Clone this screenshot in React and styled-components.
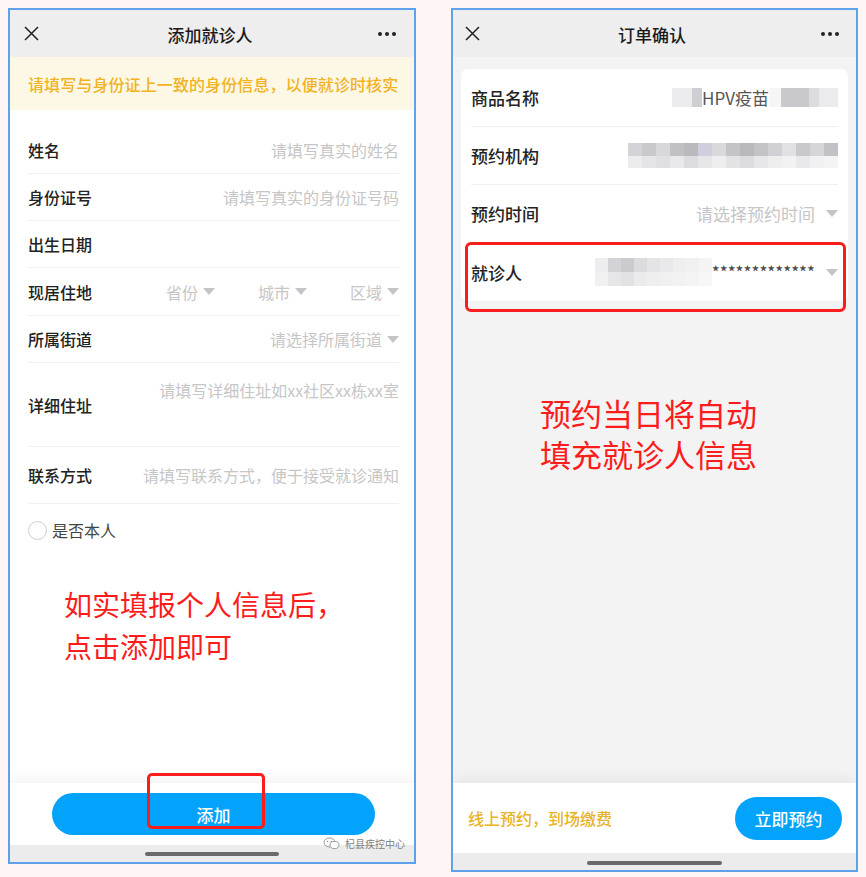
import React from "react";
import styled, { createGlobalStyle } from "styled-components";

const Global = createGlobalStyle`
  html, body { margin: 0; padding: 0; background: #fdf6f5; }
  body { font-family: "Noto Sans CJK SC", "Noto Sans", sans-serif; }
  * { box-sizing: border-box; }
`;

const Page = styled.div`
  display: flex;
  align-items: flex-start;
  gap: 35px;
  padding: 8px 0 0 8px;
  width: 866px;
  height: 877px;
  overflow: hidden;
`;

const Phone = styled.div`
  width: ${(p) => p.$w}px;
  height: ${(p) => p.$h}px;
  border: 2px solid #5ea2ec;
  display: flex;
  flex-direction: column;
  background: ${(p) => p.$bg};
  overflow: hidden;
`;

const NavBar = styled.div`
  height: 47px;
  flex: none;
  background: #eeeeee;
  display: grid;
  grid-template-columns: 40px 1fr 40px;
  align-items: center;
  padding: 0 ${(p) => p.$pr}px 0 ${(p) => p.$pl}px;
`;

const NavTitle = styled.div`
  text-align: center;
  font-size: 17px;
  font-weight: 500;
  color: #1a1a1a;
  line-height: 24px;
  padding-top: 2px;
`;

const DotsWrap = styled.div`
  display: flex;
  justify-content: flex-end;
  gap: 3px;
  padding-top: 1px;
`;

const Dot = styled.span`
  width: 4px;
  height: 4px;
  border-radius: 50%;
  background: #222;
`;

const CloseIcon = () => (
  <svg width="15" height="15" viewBox="0 0 15 15">
    <path d="M1 1 L14 14 M14 1 L1 14" stroke="#222" strokeWidth="1.5" fill="none" />
  </svg>
);

const Dots = () => (
  <DotsWrap>
    <Dot />
    <Dot />
    <Dot />
  </DotsWrap>
);

const Banner = styled.div`
  height: 53px;
  flex: none;
  background: #fdf8e5;
  color: #f1b224;
  font-size: 16px;
  font-weight: 500;
  display: flex;
  align-items: center;
  padding: 0 0 0 18px;
  white-space: nowrap;
  letter-spacing: 0.1px;
`;

const FormBody = styled.div`
  flex: 1;
  padding: 17px 15px 0 18px;
`;

const Row = styled.div`
  height: ${(p) => p.$h || 47}px;
  border-bottom: 1px solid #f1f1f1;
  display: flex;
  align-items: center;
  justify-content: space-between;
`;

const Label = styled.div`
  font-size: ${(p) => p.$fs || 16}px;
  font-weight: 500;
  color: #222;
  white-space: nowrap;
`;

const Placeholder = styled.div`
  font-size: ${(p) => p.$fs || 16}px;
  color: #c6c6c6;
  white-space: nowrap;
  display: flex;
  align-items: center;
  gap: ${(p) => p.$gap || 5}px;
  align-self: ${(p) => (p.$top ? "flex-start" : "center")};
  padding-top: ${(p) => (p.$top ? 15 : 0)}px;
`;

const Tri = styled.span`
  width: 0;
  height: 0;
  border-left: 6px solid transparent;
  border-right: 6px solid transparent;
  border-top: 7px solid #c3c3c8;
  flex: none;
  margin-left: ${(p) => p.$ml || 0}px;
`;

const RegionGrid = styled.div`
  display: grid;
  grid-template-columns: repeat(3, 92px);
  justify-items: end;
`;

const CheckRow = styled.div`
  height: 52px;
  display: flex;
  align-items: center;
  gap: 5px;
  font-size: 16px;
  color: #444;
`;

const Circle = styled.span`
  width: 19px;
  height: 19px;
  border-radius: 50%;
  border: 1px solid #cfcfcf;
  background: #fff;
`;

const Note = styled.div`
  color: #fb1c1c;
  font-size: ${(p) => p.$fs}px;
  line-height: ${(p) => p.$lh}px;
  margin: ${(p) => p.$mt}px 0 0 ${(p) => p.$ml}px;
  white-space: nowrap;
`;

const BottomBar = styled.div`
  position: relative;
  height: ${(p) => p.$h}px;
  flex: none;
  background: #fff;
  box-shadow: 0 -5px 12px rgba(0, 0, 0, 0.05);
  display: flex;
  align-items: center;
  justify-content: ${(p) => p.$justify};
  padding: 0 ${(p) => p.$pr}px 0 ${(p) => p.$pl}px;
`;

const BlueButton = styled.button`
  border: none;
  background: #03a3fb;
  color: #fff;
  font-family: inherit;
  font-size: 17px;
  font-weight: 500;
  width: ${(p) => p.$w}px;
  height: ${(p) => p.$h}px;
  border-radius: 22px;
  padding: 0;
`;

const HomeArea = styled.div`
  position: relative;
  height: 17px;
  flex: none;
  background: #ececec;
  display: flex;
  justify-content: center;
  align-items: flex-start;
  padding-top: ${(p) => p.$pt}px;
`;

const HomeIndicator = styled.span`
  width: ${(p) => p.$w}px;
  height: 4px;
  border-radius: 2px;
  background: #6a6a6a;
`;

const RedBox = styled.div`
  position: absolute;
  left: ${(p) => p.$l}px;
  top: ${(p) => p.$t}px;
  width: ${(p) => p.$w}px;
  height: ${(p) => p.$h}px;
  border: 3px solid #fb1c1c;
  border-radius: ${(p) => p.$r}px;
  pointer-events: none;
`;

const Watermark = styled.div`
  position: absolute;
  left: 313px;
  top: -9px;
  display: flex;
  align-items: center;
  gap: 5px;
  font-size: 10px;
  color: #7d7d7d;
  white-space: nowrap;
`;

const WeChat = () => (
  <svg width="17" height="13" viewBox="0 0 17 13">
    <ellipse cx="6.5" cy="5.5" rx="5.5" ry="4.5" fill="none" stroke="#9a9a9a" strokeWidth="1" />
    <ellipse cx="11.5" cy="8" rx="4.5" ry="3.6" fill="#fff" stroke="#9a9a9a" strokeWidth="1" />
    <circle cx="4.5" cy="4.5" r="0.8" fill="#9a9a9a" />
    <circle cx="8.2" cy="4.5" r="0.8" fill="#9a9a9a" />
  </svg>
);

/* right panel */

const GrayBody = styled.div`
  flex: 1;
  background: #f3f3f3;
  padding: 12px 8px 0 8px;
`;

const Card = styled.div`
  background: #fff;
  border-radius: 7px;
  padding: 0 10px;
`;

const CardRow = styled.div`
  position: relative;
  height: 58px;
  display: flex;
  align-items: center;
  justify-content: space-between;
  border-bottom: ${(p) => (p.$last ? "none" : "1px solid #f0f0f0")};
`;

const Masked = styled.div`
  display: flex;
  align-items: center;
`;

const Cell = styled.span`
  display: block;
  width: ${(p) => p.$w}px;
  height: ${(p) => p.$h || 19}px;
  background: ${(p) => p.$c};
  flex: none;
`;

const MosaicGrid = styled.div`
  display: grid;
  grid-template-columns: repeat(${(p) => p.$cols}, ${(p) => p.$cw}px);
  grid-template-rows: ${(p) => p.$rows};
  filter: blur(0.6px);
`;

const ValueText = styled.span`
  font-size: 17px;
  color: ${(p) => p.$c || "#555"};
  white-space: nowrap;
  line-height: 20px;
`;

const HintText = styled.div`
  color: #e9b325;
  font-size: 16px;
  font-weight: 500;
`;

const orgTop = ["#d4d4d8", "#c9c9cd", "#d8d8db", "#c0c0c5", "#b9b9be", "#cecede", "#d9d9dc", "#c4c4c8", "#b8b8bd", "#c3c3c7", "#d1d1d5", "#e1e1e3", "#c9c9cd", "#d6d6d9", "#c1c1c6"];
const orgBot = ["#ececee", "#e5e5e7", "#e0e0e3", "#e9e9eb", "#dddde0", "#e6e6e8", "#eeeeef", "#e3e3e5", "#dcdcdf", "#e7e7e9", "#eeeeef", "#f2f2f3", "#e9e9eb", "#f1f1f2", "#f4f4f5"];
const patTop = ["#ededef", "#d3d3d7", "#cbcbcf", "#dcdcdf", "#e4e4e6", "#e9e9eb", "#eeeeef", "#f0f0f1", "#f4f4f5"];
const patBot = ["#f1f1f2", "#e6e6e8", "#e2e2e4", "#ebebed", "#eeeeef", "#f0f0f1", "#f2f2f3", "#f4f4f5", "#f7f7f7"];

export default function App() {
  return (
    <>
      <Global />
      <Page>
        <Phone $w={408} $h={856} $bg="#fff">
          <NavBar $pl={14} $pr={18}>
            <CloseIcon />
            <NavTitle>添加就诊人</NavTitle>
            <Dots />
          </NavBar>
          <Banner>请填写与身份证上一致的身份信息，以便就诊时核实</Banner>
          <FormBody>
            <Row>
              <Label>姓名</Label>
              <Placeholder>请填写真实的姓名</Placeholder>
            </Row>
            <Row>
              <Label>身份证号</Label>
              <Placeholder>请填写真实的身份证号码</Placeholder>
            </Row>
            <Row>
              <Label>出生日期</Label>
            </Row>
            <Row $h={48}>
              <Label>现居住地</Label>
              <RegionGrid>
                <Placeholder>
                  省份<Tri />
                </Placeholder>
                <Placeholder>
                  城市<Tri />
                </Placeholder>
                <Placeholder>
                  区域<Tri />
                </Placeholder>
              </RegionGrid>
            </Row>
            <Row>
              <Label>所属街道</Label>
              <Placeholder>
                请选择所属街道<Tri />
              </Placeholder>
            </Row>
            <Row $h={84}>
              <Label>详细住址</Label>
              <Placeholder $top>请填写详细住址如xx社区xx栋xx室</Placeholder>
            </Row>
            <Row $h={57}>
              <Label>联系方式</Label>
              <Placeholder>请填写联系方式，便于接受就诊通知</Placeholder>
            </Row>
            <CheckRow>
              <Circle />
              是否本人
            </CheckRow>
            <Note $fs={28} $lh={42} $mt={27} $ml={36}>
              如实填报个人信息后，
              <br />
              点击添加即可
            </Note>
          </FormBody>
          <BottomBar $h={62} $justify="flex-start" $pl={42} $pr={39}>
            <BlueButton $w={323} $h={42}>添加</BlueButton>
            <RedBox $l={137} $t={-10} $w={118} $h={56} $r={5} />
          </BottomBar>
          <HomeArea $pt={7}>
            <HomeIndicator $w={134} />
            <Watermark>
              <WeChat />
              杞县疾控中心
            </Watermark>
          </HomeArea>
        </Phone>

        <Phone $w={407} $h={864} $bg="#f3f3f3">
          <NavBar $pl={12} $pr={17}>
            <CloseIcon />
            <NavTitle>订单确认</NavTitle>
            <Dots />
          </NavBar>
          <GrayBody>
            <Card>
              <CardRow>
                <Label $fs={17}>商品名称</Label>
                <Masked>
                  <Cell $w={20} $c="#ececee" />
                  <Cell $w={10} $c="#cfcfd3" />
                  <ValueText>HPV疫苗</ValueText>
                  <Cell $w={12} $c="#f6f6f6" />
                  <Cell $w={28} $c="#c9c9cd" />
                  <Cell $w={10} $c="#dcdcdf" />
                  <Cell $w={19} $c="#ebebed" />
                </Masked>
              </CardRow>
              <CardRow>
                <Label $fs={17}>预约机构</Label>
                <MosaicGrid $cols={15} $cw={14} $rows="13px 12px">
                  {orgTop.map((c, i) => (
                    <Cell key={"t" + i} $w={14} $h={13} $c={c} />
                  ))}
                  {orgBot.map((c, i) => (
                    <Cell key={"b" + i} $w={14} $h={12} $c={c} />
                  ))}
                </MosaicGrid>
              </CardRow>
              <CardRow>
                <Label $fs={17}>预约时间</Label>
                <Placeholder $fs={17} $gap={11}>
                  请选择预约时间<Tri />
                </Placeholder>
              </CardRow>
              <CardRow $last>
                <Label $fs={17}>就诊人</Label>
                <Masked>
                  <MosaicGrid $cols={9} $cw={13} $rows="14px 14px">
                    {patTop.map((c, i) => (
                      <Cell key={"pt" + i} $w={13} $h={14} $c={c} />
                    ))}
                    {patBot.map((c, i) => (
                      <Cell key={"pb" + i} $w={13} $h={14} $c={c} />
                    ))}
                  </MosaicGrid>
                  <ValueText $c="#444">*************</ValueText>
                  <Tri $ml={11} />
                </Masked>
                <RedBox $l={-6} $t={-1} $w={381} $h={70} $r={6} />
              </CardRow>
            </Card>
            <Note $fs={31} $lh={41} $mt={91} $ml={79}>
              预约当日将自动
              <br />
              填充就诊人信息
            </Note>
          </GrayBody>
          <BottomBar $h={70} $justify="space-between" $pl={15} $pr={14}>
            <HintText>线上预约，到场缴费</HintText>
            <BlueButton $w={107} $h={43}>立即预约</BlueButton>
          </BottomBar>
          <HomeArea $pt={8}>
            <HomeIndicator $w={135} />
          </HomeArea>
        </Phone>
      </Page>
    </>
  );
}
